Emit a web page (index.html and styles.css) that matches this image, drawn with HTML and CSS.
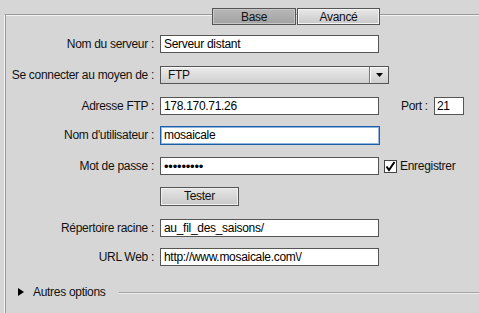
FILE: index.html
```html
<!DOCTYPE html>
<html lang="fr">
<head>
  <meta charset="UTF-8">
  <title>Serveur</title>
  <link rel="stylesheet" href="styles.css">
</head>
<body>
  <div class="panel">
    <div class="tabs">
      <button class="tab tab-active">Base</button>
      <button class="tab">Avancé</button>
    </div>

    <div class="form">
      <div class="row">
        <label class="lbl">Nom du serveur :</label>
        <input class="field" type="text" value="Serveur distant">
      </div>
      <div class="row">
        <label class="lbl">Se connecter au moyen de :</label>
        <div class="select">
          <span class="select-value">FTP</span>
          <span class="select-btn">
            <svg width="7" height="4" viewBox="0 0 7 4"><polygon points="0,0 7,0 3.5,4" fill="#000"/></svg>
          </span>
        </div>
      </div>
      <div class="row">
        <label class="lbl">Adresse FTP :</label>
        <input class="field" type="text" value="178.170.71.26">
        <label class="lbl-port">Port :</label>
        <input class="field field-port" type="text" value="21">
      </div>
      <div class="row">
        <label class="lbl">Nom d'utilisateur :</label>
        <input class="field field-focus" type="text" value="mosaicale">
      </div>
      <div class="row">
        <label class="lbl">Mot de passe :</label>
        <div class="field field-pass">&#8226;&#8226;&#8226;&#8226;&#8226;&#8226;&#8226;&#8226;&#8226;</div>
        <span class="check">
          <svg width="11" height="11" viewBox="0 0 11 11"><polyline points="1.5,5.5 4,9 9.5,1" fill="none" stroke="#000" stroke-width="2"/></svg>
        </span>
        <span class="check-text">Enregistrer</span>
      </div>
      <div class="row">
        <span class="lbl"></span>
        <button class="btn">Tester</button>
      </div>
      <div class="row">
        <label class="lbl">Répertoire racine :</label>
        <input class="field" type="text" value="au_fil_des_saisons/">
      </div>
      <div class="row">
        <label class="lbl">URL Web :</label>
        <input class="field" type="text" value="http://www.mosaicale.com\/">
      </div>
    </div>

    <div class="more">
      <svg class="more-arrow" width="6" height="8" viewBox="0 0 6 8"><polygon points="0,0 6,4 0,8" fill="#000"/></svg>
      <span class="more-text">Autres options</span>
      <span class="more-rule"></span>
    </div>
  </div>
</body>
</html>
```

FILE: styles.css
```css
body {
  margin: 0;
  background-color: #d6d6d6;
  font-family: 'Liberation Sans', Arial, sans-serif;
  font-size: 12px;
  letter-spacing: -0.3px;
  color: #111;
  height: 313px;
  overflow: hidden;
}

.panel {
  margin: 14px 0 0 4px;
  height: 298px;
  border-top: 1px solid #9a9a9a;
  border-left: 1px solid #f2f2f2;
  box-shadow: inset 1px 0 0 #9a9a9a, inset 0 1px 0 #f2f2f2;
}

.tabs {
  display: flex;
  margin: -7px 0 0 207px;
  gap: 1px;
}

.tab {
  box-sizing: border-box;
  width: 83px;
  height: 17px;
  padding: 0;
  border: 1px solid #555;
  background: linear-gradient(#e8e8e8, #c8c8c8);
  box-shadow: inset 0 0 0 1px #f4f4f4;
  font-family: inherit;
  font-size: 12px;
  letter-spacing: inherit;
  color: #111;
  line-height: 14px;
}

.tab-active {
  width: 84px;
  background: linear-gradient(#b8b8b8, #a2a2a2);
  box-shadow: inset 0 0 0 1px #c6c6c6;
}

.form {
  display: grid;
  grid-template-rows: 31px 31px 29px 31px 30px 32px 29px 18px;
  margin-top: 10px;
}

.row {
  display: flex;
  align-items: center;
  height: 18px;
}

.lbl {
  box-sizing: border-box;
  width: 150px;
  padding-right: 1px;
  margin-right: 5px;
  text-align: right;
  white-space: nowrap;
}

.field {
  box-sizing: border-box;
  width: 219px;
  height: 18px;
  margin: 0;
  padding: 0 3px;
  border: 1px solid #555;
  background: #fff;
  font-family: inherit;
  font-size: 12px;
  letter-spacing: inherit;
  color: #000;
  outline: none;
}

.field-focus {
  height: 19px;
  width: 220px;
  border-color: #1c5fa8;
  box-shadow: inset 0 0 0 1px #8fb4de;
}

.field-pass {
  display: flex;
  align-items: center;
  font-size: 13px;
  letter-spacing: -0.2px;
}

.lbl-port {
  margin: 0 6px 0 22px;
}

.field-port {
  width: 30px;
  padding: 0 2px;
}

.select {
  box-sizing: border-box;
  display: flex;
  width: 229px;
  height: 18px;
  border: 1px solid #555;
  background: linear-gradient(#ececec, #cfcfcf);
  box-shadow: inset 0 1px 0 #f8f8f8;
}

.select-value {
  flex: 1;
  padding-left: 7px;
  line-height: 16px;
}

.select-btn {
  display: flex;
  align-items: center;
  justify-content: center;
  width: 18px;
  border-left: 1px solid #777;
  box-shadow: inset 1px 0 0 #fafafa;
}

.check {
  box-sizing: border-box;
  display: flex;
  align-items: center;
  justify-content: center;
  width: 13px;
  height: 13px;
  margin-left: 5px;
  border: 1px solid #444;
  background: #fff;
}

.check-text {
  margin-left: 3px;
}

.btn {
  box-sizing: border-box;
  width: 79px;
  height: 19px;
  padding: 0;
  border: 1px solid #555;
  background: linear-gradient(#e6e6e6, #c8c8c8);
  box-shadow: inset 0 0 0 1px #f0f0f0;
  font-family: inherit;
  font-size: 12px;
  letter-spacing: inherit;
  color: #111;
}

.more {
  display: flex;
  align-items: center;
  height: 14px;
  margin-top: 19px;
}

.more-arrow {
  margin-left: 13px;
}

.more-text {
  margin-left: 9px;
}

.more-rule {
  flex: 1;
  height: 1px;
  margin-left: 13px;
  background: #a4a4a4;
  box-shadow: 0 1px 0 #ececec;
}
```
